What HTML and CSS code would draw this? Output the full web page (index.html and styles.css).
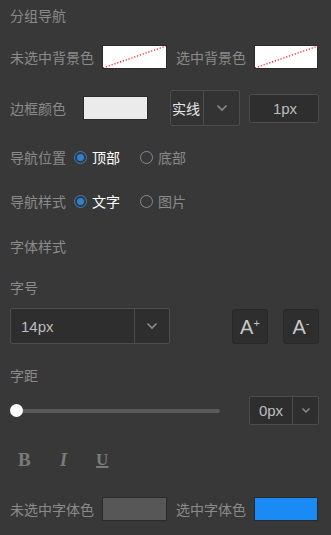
FILE: index.html
```html
<!DOCTYPE html>
<html lang="zh">
<head>
<meta charset="utf-8">
<link rel="stylesheet" href="styles.css">
</head>
<body>
<div class="panel">
  <div class="title">分组导航</div>

  <div class="row r2">
    <span class="label">未选中背景色</span>
    <span class="swatch empty"><svg width="63" height="22" viewBox="0 0 63 22"><line x1="0" y1="22" x2="63" y2="0" stroke="#f00" stroke-width="1.2" stroke-dasharray="1.2 1.8"/></svg></span>
    <span class="label ml9">选中背景色</span>
    <span class="swatch empty"><svg width="63" height="22" viewBox="0 0 63 22"><line x1="0" y1="22" x2="63" y2="0" stroke="#f00" stroke-width="1.2" stroke-dasharray="1.2 1.8"/></svg></span>
  </div>

  <div class="row r3">
    <span class="label">边框颜色</span>
    <span class="swatch light border-sw"></span>
    <div class="select line-select">
      <span class="sel-text">实线</span>
      <span class="sel-arrow"><svg width="12" height="8" viewBox="0 0 12 8"><path d="M1.5 1.5 L6 6 L10.5 1.5" fill="none" stroke="#8a8a8a" stroke-width="1.6"/></svg></span>
    </div>
    <div class="input px-input">1px</div>
  </div>

  <div class="row r4">
    <span class="label">导航位置</span>
    <span class="radio checked"></span><span class="opt on">顶部</span>
    <span class="radio second"></span><span class="opt">底部</span>
  </div>

  <div class="row r5">
    <span class="label">导航样式</span>
    <span class="radio checked"></span><span class="opt on">文字</span>
    <span class="radio second"></span><span class="opt">图片</span>
  </div>

  <div class="row r6"><span class="label">字体样式</span></div>

  <div class="row r7"><span class="label">字号</span></div>

  <div class="row r8">
    <div class="select size-select">
      <span class="sel-text size-text">14px</span>
      <span class="sel-arrow"><svg width="12" height="8" viewBox="0 0 12 8"><path d="M1.5 1.5 L6 6 L10.5 1.5" fill="none" stroke="#8a8a8a" stroke-width="1.6"/></svg></span>
    </div>
    <div class="abtn first">A<sup>+</sup></div>
    <div class="abtn">A<sup>-</sup></div>
  </div>

  <div class="row r9"><span class="label">字距</span></div>

  <div class="row r10">
    <div class="slider"><span class="knob"></span></div>
    <div class="select sp-select">
      <span class="sel-text sp-text">0px</span>
      <span class="sel-arrow"><svg width="10" height="7" viewBox="0 0 10 7"><path d="M1.5 1.5 L5 5 L8.5 1.5" fill="none" stroke="#8a8a8a" stroke-width="1.5"/></svg></span>
    </div>
  </div>

  <div class="row r11">
    <span class="fmt b">B</span>
    <span class="fmt i">I</span>
    <span class="fmt u">U</span>
  </div>

  <div class="row r12">
    <span class="label">未选中字体色</span>
    <span class="swatch gray"></span>
    <span class="label ml9">选中字体色</span>
    <span class="swatch blue"></span>
  </div>
</div>
</body>
</html>
```

FILE: styles.css
```css
html, body {
  margin: 0;
  padding: 0;
  background: #383838;
}
body {
  width: 331px;
  height: 535px;
  overflow: hidden;
  font-family: "Noto Sans CJK SC", "Liberation Sans", sans-serif;
  font-size: 14px;
  color: #8a8a8a;
}
.panel {
  padding: 5px 12px 0 10px;
}
.title {
  height: 20px;
  line-height: 20px;
}
.row {
  display: flex;
  align-items: center;
}
.label {
  line-height: 20px;
  white-space: nowrap;
}
.ml9 { margin-left: 9px; }

.r2 { margin-top: 20px; height: 24px; }
.swatch {
  display: block;
  box-sizing: border-box;
  width: 65px;
  height: 24px;
  border: 1px solid #2a2a2a;
  margin-left: 8px;
}
.swatch svg { display: block; }
.swatch.empty { background: #fff; }
.r2 .swatch:last-child { width: 64px; }

.r3 { margin-top: 21px; height: 36px; }
.swatch.light { background: #ebebeb; width: 65px; height: 24px; margin-left: 17px; }
.select {
  display: flex;
  box-sizing: border-box;
  border: 1px solid #4d4d4d;
  border-radius: 2px;
  background: #333;
}
.line-select {
  width: 70px;
  height: 36px;
  margin-left: 22px;
}
.sel-text {
  display: flex;
  align-items: center;
  border-right: 1px solid #4d4d4d;
  box-sizing: border-box;
}
.line-select .sel-text {
  width: 33px;
  padding-left: 1px;
  color: #e6e6e6;
}
.sel-arrow {
  flex: 1;
  display: flex;
  align-items: center;
  justify-content: center;
}
.input {
  box-sizing: border-box;
  border: 1px solid #4d4d4d;
  border-radius: 2px;
  background: #2e2e2e;
  color: #bdbdbd;
  font-family: "Liberation Sans", sans-serif;
  font-size: 15px;
  display: flex;
  align-items: center;
  justify-content: center;
}
.px-input {
  width: 70px;
  height: 29px;
  margin-left: auto;
  padding-left: 2px;
}

.r4 { margin-top: 21px; height: 20px; }
.r5 { margin-top: 24px; height: 20px; }
.radio {
  box-sizing: border-box;
  width: 13px;
  height: 13px;
  border-radius: 50%;
  border: 1px solid #8a8a8a;
  margin-left: 8px;
  margin-right: 5px;
  position: relative;
}
.radio.checked {
  border-color: #2f80d0;
}
.radio.checked::after {
  content: "";
  position: absolute;
  left: 2px;
  top: 2px;
  width: 7px;
  height: 7px;
  border-radius: 50%;
  background: #2f80d0;
}
.radio.second { margin-left: 20px; }
.opt { line-height: 20px; }
.opt.on { color: #fff; }

.r6 { margin-top: 25px; height: 20px; }
.r7 { margin-top: 21px; height: 20px; }

.r8 { margin-top: 11px; height: 36px; }
.size-select {
  width: 160px;
  height: 36px;
  background: #2e2e2e;
}
.size-text {
  width: 124px;
  padding-left: 10px;
  color: #bdbdbd;
  font-family: "Liberation Sans", sans-serif;
  font-size: 15px;
}
.abtn {
  box-sizing: border-box;
  width: 36px;
  height: 35px;
  border: 1px solid #282828;
  border-radius: 3px;
  background: #2e2e2e;
  color: #c8c8c8;
  font-family: "Liberation Sans", sans-serif;
  font-size: 20px;
  display: flex;
  align-items: center;
  justify-content: center;
  padding-top: 3px;
}
.abtn.first { margin-left: auto; margin-right: 15px; }
.abtn sup {
  font-size: 11px;
  line-height: 1;
  align-self: flex-start;
  margin-top: 5px;
  margin-left: 0;
}

.r9 { margin-top: 21px; height: 20px; }

.r10 { margin-top: 11px; height: 29px; }
.slider {
  position: relative;
  width: 210px;
  height: 4px;
  margin-left: 0;
  display: flex;
  align-items: center;
}
.slider::before {
  content: "";
  position: absolute;
  left: 6px;
  right: 0;
  top: 0;
  height: 4px;
  border-radius: 2px;
  background: #5a5a5a;
}
.knob {
  position: absolute;
  left: 0;
  top: -5px;
  width: 13px;
  height: 13px;
  border-radius: 50%;
  background: #fff;
}
.sp-select {
  width: 70px;
  height: 29px;
  margin-left: auto;
  background: #2e2e2e;
}
.sp-text {
  width: 43px;
  justify-content: center;
  color: #bdbdbd;
  font-family: "Liberation Sans", sans-serif;
  font-size: 15px;
}

.r11 { margin-top: 25px; height: 20px; }
.fmt {
  font-family: "Liberation Serif", serif;
  font-weight: bold;
  font-size: 19px;
  color: #7a7a7a;
  line-height: 20px;
}
.fmt.b { margin-left: 8px; }
.fmt.i { font-style: italic; margin-left: 29px; }
.fmt.u { text-decoration: underline; text-decoration-thickness: 2px; margin-left: 29px; font-size: 17px; }

.r12 { margin-top: 27px; height: 24px; }
.swatch.gray { background: #575757; }
.swatch.blue { background: #1a8af5; width: 64px; }
```
